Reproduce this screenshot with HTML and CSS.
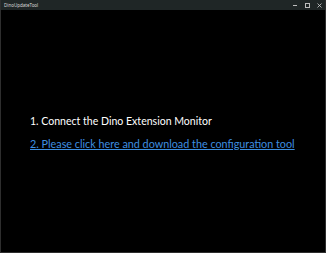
FILE: index.html
```html
<!DOCTYPE html>
<html>
<head>
<meta charset="utf-8">
<link rel="stylesheet" href="styles.css">
</head>
<body>
<div class="window">
  <div class="titlebar">
    <span class="title">DinoUpdateTool</span>
    <div class="controls">
      <span class="ctl min"></span>
      <span class="ctl max"></span>
      <span class="ctl close">
        <svg width="5" height="5" viewBox="0 0 5 5"><path d="M0.5 0.5L4.5 4.5M4.5 0.5L0.5 4.5" stroke="#cfcfcf" stroke-width="0.8"/></svg>
      </span>
    </div>
  </div>
  <div class="content">
    <p class="step">1. Connect the Dino Extension Monitor</p>
    <a class="link" href="#">2. Please click here and download the configuration tool</a>
  </div>
</div>
</body>
</html>
```
FILE: styles.css
```css
html, body {
  margin: 0;
  padding: 0;
  background: #000;
  height: 100%;
}
.window {
  box-sizing: border-box;
  width: 326px;
  height: 253px;
  border: 1px solid #2e2e2e;
  border-top: none;
  display: flex;
  flex-direction: column;
  background: #000;
}
.titlebar {
  height: 10px;
  background: #1f2626;
  display: flex;
  align-items: center;
  justify-content: space-between;
  padding-left: 3px;
}
.title {
  font-family: "Noto Sans", sans-serif;
  font-size: 4.5px;
  color: #d8d8d8;
  line-height: 10px;
}
.controls {
  display: flex;
  align-items: center;
  height: 10px;
}
.ctl {
  width: 12px;
  height: 10px;
  display: flex;
  align-items: center;
  justify-content: center;
}
.min::before {
  content: "";
  width: 4px;
  height: 0;
  border-top: 1px solid #bdbdbd;
}
.max::before {
  content: "";
  width: 3px;
  height: 3px;
  border: 1px solid #bdbdbd;
}
.content {
  flex: 1;
  display: flex;
  flex-direction: column;
  justify-content: center;
  align-items: flex-start;
  padding-left: 29px;
  padding-top: 2px;
  font-family: "Lato", sans-serif;
  gap: 7px;
}
.step {
  margin: 0;
  font-size: 10.55px;
  color: #ffffff;
  line-height: 16px;
  white-space: nowrap;
}
.link {
  font-size: 10.8px;
  color: #3e8fe0;
  line-height: 16px;
  text-decoration: underline;
  white-space: nowrap;
}
```
